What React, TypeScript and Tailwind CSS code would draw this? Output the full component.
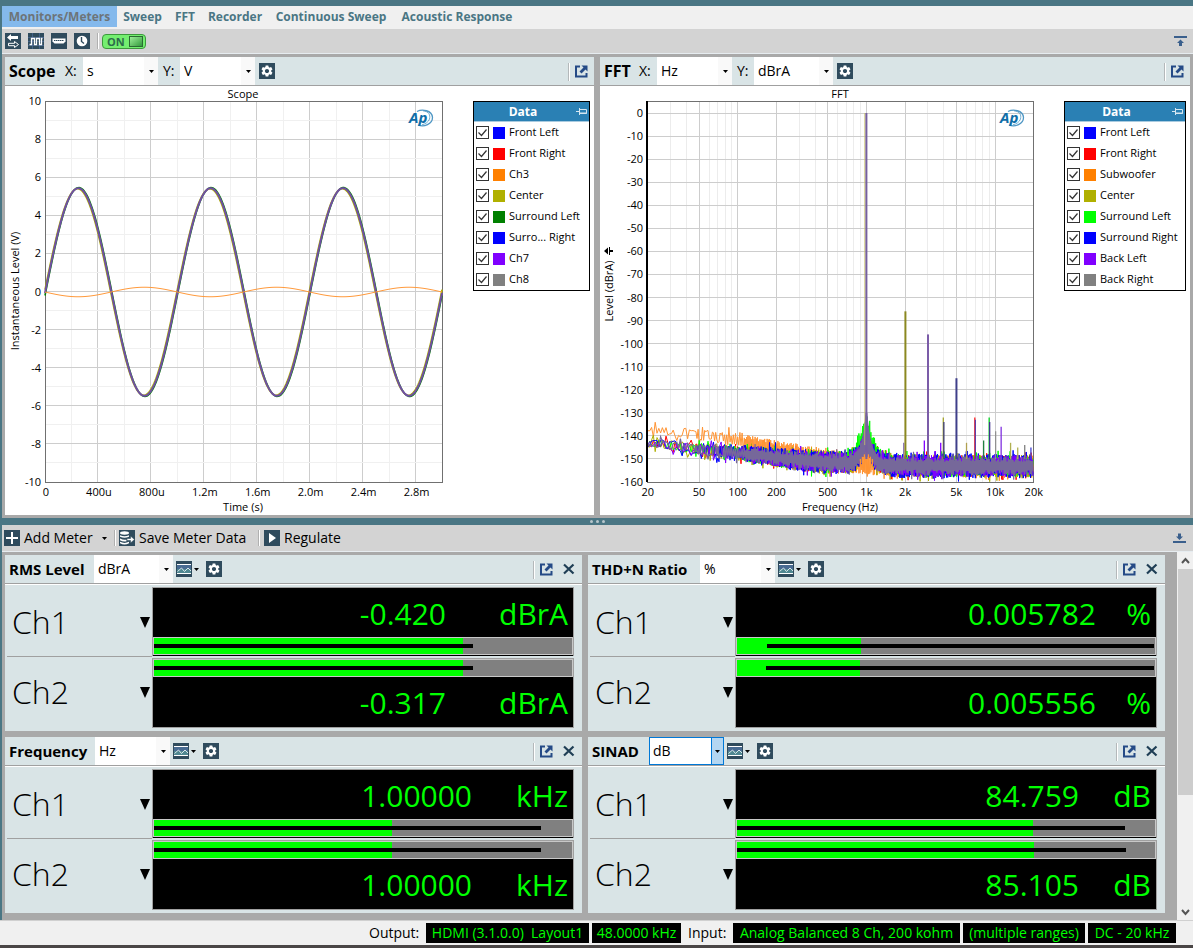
import { useState } from "react";
import type { ReactNode } from "react";
import { MdSettings } from "react-icons/md";

type Channel = { name: string; color: string };

const tabs = [
  { label: "Monitors/Meters", width: "w-[115px]" },
  { label: "Sweep", width: "w-[51px]" },
  { label: "FFT", width: "w-[34px]" },
  { label: "Recorder", width: "w-[66px]" },
  { label: "Continuous Sweep", width: "w-[126px]" },
  { label: "Acoustic Response", width: "w-[126px]" },
];

const scopeChannels: Channel[] = [
  { name: "Front Left", color: "#0000ff" },
  { name: "Front Right", color: "#ff0000" },
  { name: "Ch3", color: "#ff8000" },
  { name: "Center", color: "#b0b000" },
  { name: "Surround Left", color: "#008000" },
  { name: "Surro... Right", color: "#0000ff" },
  { name: "Ch7", color: "#8000ff" },
  { name: "Ch8", color: "#808080" },
];

const fftChannels: Channel[] = [
  { name: "Front Left", color: "#0000ff" },
  { name: "Front Right", color: "#ff0000" },
  { name: "Subwoofer", color: "#ff8000" },
  { name: "Center", color: "#b0b000" },
  { name: "Surround Left", color: "#00ff00" },
  { name: "Surround Right", color: "#0000ff" },
  { name: "Back Left", color: "#8000ff" },
  { name: "Back Right", color: "#808080" },
];

type Reading = { value: string; fill: number; from: number; to: number };

type MeterData = {
  title: string;
  titleWidth: string;
  selectWidth: string;
  unit: string;
  unitWidth: string;
  focused?: boolean;
  readings: [Reading, Reading];
};

// fill / from / to are percentages of the bar length
const meters: MeterData[] = [
  {
    title: "RMS Level",
    titleWidth: "w-[89px]",
    selectWidth: "w-[79px]",
    unit: "dBrA",
    unitWidth: "w-[122px]",
    readings: [
      { value: "-0.420", fill: 74, from: 0, to: 76.3 },
      { value: "-0.317", fill: 74, from: 0, to: 76.3 },
    ],
  },
  {
    title: "THD+N Ratio",
    titleWidth: "w-[112px]",
    selectWidth: "w-[75px]",
    unit: "%",
    unitWidth: "w-[55px]",
    readings: [
      { value: "0.005782", fill: 29.7, from: 7.2, to: 99.7 },
      { value: "0.005556", fill: 29.4, from: 7, to: 99.7 },
    ],
  },
  {
    title: "Frequency",
    titleWidth: "w-[90px]",
    selectWidth: "w-[75px]",
    unit: "Hz",
    unitWidth: "w-[96px]",
    readings: [
      { value: "1.00000", fill: 56.9, from: 0, to: 92.6 },
      { value: "1.00000", fill: 56.9, from: 0, to: 92.6 },
    ],
  },
  {
    title: "SINAD",
    titleWidth: "w-[61px]",
    selectWidth: "w-[75px]",
    unit: "dB",
    unitWidth: "w-[72px]",
    focused: true,
    readings: [
      { value: "84.759", fill: 70.8, from: 0, to: 92.8 },
      { value: "85.105", fill: 71, from: 0, to: 93 },
    ],
  },
];

/* ---------- icons ---------- */

function Tile({ children }: { children: ReactNode }) {
  return (
    <svg viewBox="0 0 16 16" className="size-4 shrink-0" aria-hidden="true">
      <rect width="16" height="16" fill="#2f4b5d" />
      {children}
    </svg>
  );
}

const SwapIcon = () => (
  <Tile>
    <path d="M6 1v2h7v3H6v2L2 4.500z" fill="#fff" />
    <path d="M9.500 8.500v1.800h-6v2.400h6v1.800l4-3z" fill="none" stroke="#fff" />
  </Tile>
);

const WaveIcon = () => (
  <Tile>
    <path d="M0 4.500h16M0 8.500h16M0 12.500h16M4.500 0v16M11.500 0v16" stroke="#4c6a9a" strokeWidth="0.700" />
    <path d="M1.500 11.500h2v-6h3v6h2v-6h3v6h2v-6h1" fill="none" stroke="#fff" strokeWidth="1.300" />
  </Tile>
);

const PortIcon = () => (
  <Tile>
    <path d="M1.500 5.500h13v3l-2 2h-9l-2-2z" fill="#fff" />
    <path d="M3 7.500h10" stroke="#2f4b5d" strokeDasharray="1 1" />
    <path d="M3 7.500h10" stroke="#2f4b5d" strokeWidth="0.500" />
  </Tile>
);

const ClockIcon = () => (
  <Tile>
    <circle cx="8" cy="8" r="5.300" fill="#fff" />
    <path d="M7.500 4v4.500l2.500 2" fill="none" stroke="#2f4b5d" strokeWidth="1.400" />
  </Tile>
);

const PlusIcon = () => (
  <Tile>
    <path d="M8 2v12M2 8h12" stroke="#fff" strokeWidth="2" />
  </Tile>
);

const SaveDataIcon = () => (
  <Tile>
    <ellipse cx="5.500" cy="3" rx="4.500" ry="1.700" fill="#fff" />
    <path d="M1 5.200q4.500 2 9 0v1.600q-4.500 2-9 0zM1 8.400q4 2 6.500 1v1.800q-3.500.8-6.500-1zM1 11.800q4.500 2.200 9 0v1.500q-4.500 2.600-9 0z" fill="#fff" />
    <path d="M8 8.500h3.500V6L15.500 9.500l-4 3.500v-2.500H8z" fill="#fff" stroke="#2f4b5d" strokeWidth="0.600" />
  </Tile>
);

const PlayIcon = () => (
  <Tile>
    <path d="M5 3l7 5-7 5z" fill="#fff" />
  </Tile>
);

const GraphIcon = () => (
  <Tile>
    <rect x="1" y="3" width="14" height="10" fill="#fff" />
    <rect x="1" y="4" width="14" height="4" fill="#486b92" />
    <rect x="1" y="8" width="14" height="4" fill="#4f8791" />
    <path d="M1.500 10.500L5.500 7l3 3.500L12 7l3 3" fill="none" stroke="#e8f2f4" strokeWidth="0.900" />
  </Tile>
);

const GearTile = () => (
  <span className="flex size-4 items-center justify-center bg-[#2f4b5d] text-white">
    <MdSettings size={14} />
  </span>
);

const PopOutIcon = () => (
  <svg viewBox="0 0 13 13" className="size-[13px]" aria-hidden="true">
    <path d="M5 1.500H1v10h10.500V8" fill="none" stroke="#254a86" strokeWidth="2" />
    <path d="M6.500 0.500h6v6l-2-2-4 4-2-2 4-4z" fill="#254a86" />
  </svg>
);

const CloseIcon = () => (
  <svg viewBox="0 0 12 12" className="size-3" aria-hidden="true">
    <path d="M1 1.500l9.500 9M10.500 1.500l-9.500 9" stroke="#1f3e55" strokeWidth="2.200" />
  </svg>
);

const SmallArrow = () => (
  <svg viewBox="0 0 5 3" className="h-[3px] w-[5px] shrink-0" aria-hidden="true">
    <path d="M0 0h5L2.500 3z" fill="#000" />
  </svg>
);

const PinIcon = () => (
  <svg viewBox="0 0 11 8" className="h-2 w-[11px]" aria-hidden="true">
    <path d="M0 3.500h3.500M3.500 0v7M3.500 1.500h7v4h-7" fill="none" stroke="#d5e6f1" />
    <path d="M4 5h7" stroke="#d5e6f1" />
  </svg>
);

function CollapseIcon({ up }: { up?: boolean }) {
  return (
    <svg viewBox="0 0 13 11" className="h-[11px] w-[13px]" aria-hidden="true">
      {up ? (
        <path d="M0 0h13v2H0zM6.500 3.500L10 7H8v3H5V7H3z" fill="#3a5f8c" />
      ) : (
        <path d="M0 8h13v2H0zM6.500 7L10 3.500H8v-3H5v3H3z" fill="#3a5f8c" />
      )}
    </svg>
  );
}

/* ---------- shared controls ---------- */

function UnitSelect({
  label,
  value,
  width,
  focused,
}: {
  label: string;
  value: string;
  width: string;
  focused?: boolean;
}) {
  return (
    <span className={"relative flex h-7 shrink-0 bg-white " + width}>
      <select
        aria-label={label}
        defaultValue={value}
        className={
          "h-full w-full appearance-none bg-transparent text-sm text-black outline-none " +
          (focused ? "border border-[#0078d7] pl-[3px]" : "pl-1")
        }
      >
        <option>{value}</option>
      </select>
      <span
        className={
          "pointer-events-none absolute inset-y-0 right-0 flex items-center justify-center " +
          (focused ? "w-[13px] border border-[#0078d7] bg-[#b3d6f2]" : "w-3.5 bg-[#f9f9f9]")
        }
      >
        <SmallArrow />
      </span>
    </span>
  );
}

function HeaderTools({ name, closable }: { name: string; closable?: boolean }) {
  return (
    <div className={"ml-auto flex h-full items-center gap-[5px] " + (closable ? "pr-[7px]" : "pr-1.5")}>
      <span className="mt-px h-[18px] w-0.5 border-l border-[#b4b8ba] bg-white" />
      <button aria-label={"Undock " + name}>
        <PopOutIcon />
      </button>
      {closable && (
        <button aria-label={"Close " + name} className="ml-[5px]">
          <CloseIcon />
        </button>
      )}
    </div>
  );
}

function Legend({ channels, width }: { channels: Channel[]; width: string }) {
  return (
    <div className={"mt-[15px] mr-1 shrink-0 self-start border border-black bg-white " + width}>
      <div className="flex h-5 items-center border-b border-[#a9cbe0] bg-[#2a80b4] text-xs font-bold text-white">
        <span className="flex-1 pr-1 text-center">Data</span>
        <button aria-label="Pin legend" className="pr-0.5">
          <PinIcon />
        </button>
      </div>
      {channels.map((c) => (
        <label key={c.name} className="flex h-[21px] items-center pl-0.5 text-[11px] whitespace-nowrap">
          <span className="relative mr-[4px] size-[13px]">
            <input
              type="checkbox"
              defaultChecked
              className="peer block size-[13px] appearance-none border border-[#333] bg-white"
            />
            <svg
              viewBox="0 0 13 13"
              className="pointer-events-none absolute inset-0 hidden size-[13px] peer-checked:block"
              aria-hidden="true"
            >
              <path d="M2.500 6.500l3 3 5-6" fill="none" stroke="#333" strokeWidth="1.200" />
            </svg>
          </span>
          <span className="mr-1 size-3" style={{ backgroundColor: c.color }} />
          {c.name}
        </label>
      ))}
    </div>
  );
}

function GraphPanel({
  title,
  titleWidth,
  x,
  y,
  yWidth,
  children,
}: {
  title: string;
  titleWidth: string;
  x: string;
  y: string;
  yWidth: string;
  children: ReactNode;
}) {
  return (
    <section className="flex min-w-0 flex-col bg-white">
      <header className="flex h-[29px] items-center border-b border-[#a0a0a0] bg-[#d9e4e6] pl-1 text-sm">
        <h2 className={"shrink-0 text-base font-bold " + titleWidth}>{title}</h2>
        <span className="w-[18px]">X:</span>
        <UnitSelect label={title + " X unit"} value={x} width="w-[75px]" />
        <span className="w-[22px] pl-[5px]">Y:</span>
        <UnitSelect label={title + " Y unit"} value={y} width={yWidth} />
        <button aria-label={title + " settings"} className="ml-1">
          <GearTile />
        </button>
        <HeaderTools name={title} />
      </header>
      <div className="flex">{children}</div>
    </section>
  );
}

/* ---------- graphs ---------- */

function ApLogo({ x, y }: { x: number; y: number }) {
  return (
    <g transform={`translate(${x} ${y})`}>
      <path d="M8 1.500C13 -1 23 0 23.500 7.500C23.500 14 15 17.500 9 15" fill="none" stroke="#4f97c4" strokeWidth="1.300" />
      <path d="M14 .8C20 1.500 21.500 5 20.500 9C19.500 12 16.500 14 13 14.800" fill="none" stroke="#4f97c4" strokeWidth="0.800" />
      <text x="0" y="12.500" fontSize="15" fontWeight="700" fontStyle="italic" fill="#0f6ea8">
        Ap
      </text>
    </g>
  );
}

// plot area of the scope, in viewBox units
const SC = { left: 40, right: 437, top: 15, bottom: 396 };

function sinePath(amplitude: number, shift: number) {
  const mid = (SC.top + SC.bottom) / 2 + 0.5;
  const perUnit = (SC.bottom - SC.top) / 20;
  const period = (SC.right - SC.left) / 3;
  let d = "";
  for (let x = SC.left; x <= SC.right; x++) {
    const t = ((x - SC.left - shift) / period) * Math.PI * 2;
    d += (d ? "L" : "M") + x + " " + (mid - amplitude * perUnit * Math.sin(t)).toFixed(2);
  }
  return d;
}

function ScopeGraph() {
  const stepX = (SC.right - SC.left) / 15;
  const stepY = (SC.bottom - SC.top) / 20;
  const xLabels = ["0", "400u", "800u", "1.2m", "1.6m", "2.0m", "2.4m", "2.8m"];
  return (
    <svg viewBox="0 0 468 429" className="block min-w-0 flex-1" fontSize="11" role="img" aria-label="Scope">
      <g shapeRendering="crispEdges">
        {Array.from({ length: 14 }, (_, i) => i + 1).map((i) => (
          <path
            key={i}
            d={`M${SC.left + i * stepX} ${SC.top}V${SC.bottom}`}
            stroke={i % 2 ? "#f0f0f0" : "#cdcdcd"}
          />
        ))}
        {Array.from({ length: 19 }, (_, i) => i + 1).map((i) => (
          <path
            key={i}
            d={`M${SC.left} ${SC.top + i * stepY}H${SC.right}`}
            stroke={i % 2 ? "#f0f0f0" : "#cdcdcd"}
          />
        ))}
        <rect
          x={SC.left + 0.5}
          y={SC.top + 0.5}
          width={SC.right - SC.left}
          height={SC.bottom - SC.top}
          fill="none"
          stroke="#707070"
        />
      </g>
      <path d={sinePath(5.48, 0.7)} fill="none" stroke="#008000" strokeWidth="1.600" />
      <path d={sinePath(5.42, -0.5)} fill="none" stroke="#b0b000" strokeWidth="1.600" />
      <path d={sinePath(5.45, 0.2)} fill="none" stroke="#6f4fa3" strokeWidth="2" />
      <path d={sinePath(-0.25, 0)} fill="none" stroke="#ff9a3c" />
      <text x="238" y="12" textAnchor="middle">
        Scope
      </text>
      {Array.from({ length: 11 }, (_, i) => 10 - i * 2).map((v, i) => (
        <text key={v} x="36" y={SC.top + i * 2 * stepY + 4} textAnchor="end">
          {v}
        </text>
      ))}
      {xLabels.map((v, i) => (
        <text key={v} x={SC.left + 1 + i * 2 * stepX} y="410" textAnchor="middle">
          {v}
        </text>
      ))}
      <text x="238" y="425" textAnchor="middle">
        Time (s)
      </text>
      <text transform="translate(14 205) rotate(-90)" textAnchor="middle">
        Instantaneous Level (V)
      </text>
      <ApLogo x={404} y={24} />
    </svg>
  );
}

// plot area of the FFT, in viewBox units
const FF = { left: 47, right: 433, top: 15, bottom: 396, zero: 27 };
const freqX = (f: number) => FF.left + 0.8 + (Math.log10(f / 20) / 3) * (FF.right - FF.left);
const levelY = (db: number) => FF.zero - (db / 160) * (FF.bottom - FF.zero);

function random(seed: number) {
  let s = seed;
  return () => {
    s = (s * 16807) % 2147483647;
    return s / 2147483647;
  };
}

type NoiseOptions = { lift?: number; skirt?: number; skirtWidth?: number; spread?: number };

function noisePath(seed: number, options: NoiseOptions = {}) {
  const { lift = 0, skirt = 0, skirtWidth = 6, spread = 1 } = options;
  const rnd = random(seed);
  const center = freqX(1000);
  let d = "";
  let x = FF.left + 1;
  let up = false;
  while (x < FF.right) {
    const p = (x - FF.left) / (FF.right - FF.left);
    let base = -143 - 8 * Math.min(1, p / 0.42) - 2 * Math.max(0, Math.min(1, (p - 0.42) / 0.25));
    // the lifted trace stays high up to 100 Hz and then falls back to the others
    base += lift * Math.max(0, Math.min(1, 1 - (p - 0.2) / 0.35));
    if (skirt) base += skirt * Math.exp(-Math.abs(x - center) / skirtWidth);
    const half = (1.5 + 3.2 * Math.min(1, p / 0.45)) * spread;
    const spike = rnd() > 0.93 ? 2 : 0;
    const v = base + (up ? 1 : -1) * (half * (0.4 + 0.6 * rnd()) + spike);
    d += (d ? "L" : "M") + x.toFixed(2) + " " + Math.min(FF.bottom, levelY(v)).toFixed(2);
    up = p < 0.2 ? rnd() > 0.5 : !up;
    x += p < 0.12 ? 1.8 : p < 0.25 ? 1.1 : 0.6;
  }
  return d;
}

const traces = [
  { color: "#ff0000", d: noisePath(101, { skirt: 12 }) },
  { color: "#ff9433", d: noisePath(77, { lift: 6 }) },
  { color: "#b0b000", d: noisePath(4242, { skirt: 12, spread: 1.1 }) },
  { color: "#00ff00", d: noisePath(909, { skirt: 19, skirtWidth: 8 }) },
  { color: "#0000ff", d: noisePath(5511, { skirt: 12, spread: 1.15 }) },
  { color: "#8000ff", d: noisePath(321, { skirt: 13 }) },
];

const harmonics = [
  { f: 1950, db: -143, color: "#8a70b0" },
  { f: 2010, db: -86, color: "#8b8820" },
  { f: 2820, db: -142, color: "#8000ff" },
  { f: 3010, db: -96, color: "#7b5ca8" },
  { f: 3780, db: -143, color: "#8000ff" },
  { f: 3960, db: -132, color: "#a3a32a" },
  { f: 4000, db: -134, color: "#3b3b7a" },
  { f: 5010, db: -115, color: "#3f3f8a" },
  { f: 6000, db: -143, color: "#b0a050" },
  { f: 6960, db: -132, color: "#ff2020" },
  { f: 7030, db: -133, color: "#5c40a8" },
  { f: 8150, db: -142, color: "#208040" },
  { f: 9000, db: -132, color: "#00d020" },
  { f: 9080, db: -134, color: "#403090" },
  { f: 10100, db: -138, color: "#909090" },
  { f: 11150, db: -136, color: "#8030e0" },
  { f: 13200, db: -143, color: "#b0b050" },
  { f: 15000, db: -145, color: "#b0b050" },
  { f: 17000, db: -144, color: "#808080" },
  { f: 19000, db: -145, color: "#4040d0" },
];

const gridFrequencies = [30, 40, 60, 70, 80, 90, 300, 400, 600, 700, 800, 900, 3000, 4000, 6000, 7000, 8000, 9000];
const majorFrequencies = [50, 100, 200, 500, 1000, 2000, 5000, 10000];
const fftLabels = [
  ["20", 20],
  ["50", 50],
  ["100", 100],
  ["200", 200],
  ["500", 500],
  ["1k", 1000],
  ["2k", 2000],
  ["5k", 5000],
  ["10k", 10000],
  ["20k", 20000],
] as const;

function FftGraph() {
  const center = freqX(1000);
  return (
    <svg viewBox="0 0 464 429" className="block min-w-0 flex-1" fontSize="11" role="img" aria-label="FFT">
      <g shapeRendering="crispEdges">
        {gridFrequencies.map((f) => (
          <path key={f} d={`M${freqX(f)} ${FF.top}V${FF.bottom}`} stroke="#ececec" />
        ))}
        {majorFrequencies.map((f) => (
          <path key={f} d={`M${freqX(f)} ${FF.top}V${FF.bottom}`} stroke="#cdcdcd" />
        ))}
        {Array.from({ length: 16 }, (_, i) => -i * 10).map((v) => (
          <path key={v} d={`M${FF.left} ${levelY(v)}H${FF.right}`} stroke="#cdcdcd" />
        ))}
        <rect
          x={FF.left + 0.5}
          y={FF.top + 0.5}
          width={FF.right - FF.left}
          height={FF.bottom - FF.top}
          fill="none"
          stroke="#707070"
        />
      </g>

      <g fill="none">
        {traces.map((t) => (
          <path key={t.color} d={t.d} stroke={t.color} />
        ))}
        <path
          d={`M${center - 11} ${levelY(-149)}Q${center - 3} ${levelY(-144)} ${center - 1} ${levelY(-130)}H${center + 1}Q${center + 3} ${levelY(-144)} ${center + 11} ${levelY(-149)}z`}
          fill="#7a62a0"
        />
        <path d={noisePath(64, { skirt: 12, skirtWidth: 5, spread: 0.9 })} stroke="#76689a" strokeWidth="1.200" />
        {[-6, -4, -2, 0, 2, 4, 6].map((dx) => (
          <path
            key={dx}
            d={`M${center + dx} ${levelY(-156 + Math.abs(dx) / 2)}V${levelY(-147 - Math.abs(dx) / 2)}`}
            stroke="#ff9433"
            strokeWidth="1.300"
          />
        ))}
        {harmonics.map((h) => (
          <path
            key={h.f}
            d={`M${freqX(h.f)} ${levelY(-150)}V${levelY(h.db)}`}
            stroke={h.color}
            strokeWidth={h.db > -120 ? 2 : 1.3}
          />
        ))}
        <path d={`M${center - 1.5} ${levelY(-144)}V${levelY(0)}`} stroke="#c9c46a" />
        <path d={`M${center} ${levelY(-150)}V${levelY(0)}`} stroke="#7560a0" strokeWidth="2" />
      </g>
      <path d="M47 15V396" stroke="#000" strokeWidth="2" />

      <text x="240" y="12" textAnchor="middle">
        FFT
      </text>
      {Array.from({ length: 17 }, (_, i) => -i * 10).map((v) => (
        <text key={v} x="43" y={levelY(v) + 4} textAnchor="end">
          {v}
        </text>
      ))}
      {fftLabels.map(([label, f]) => (
        <text key={label} x={freqX(f)} y="410" textAnchor="middle">
          {label}
        </text>
      ))}
      <text x="240" y="425" textAnchor="middle">
        Frequency (Hz)
      </text>
      <text transform="translate(13 205) rotate(-90)" textAnchor="middle">
        Level (dBrA)
      </text>
      <path d="M4 165l4-3.500v7zM9 161h1v8H9zM10 164h3v2h-3z" fill="#000" />
      <ApLogo x={400} y={24} />
    </svg>
  );
}

/* ---------- meters ---------- */

function LevelBar({ reading }: { reading: Reading }) {
  return (
    <div className="relative h-[18px] border border-[#c8c8c8] bg-[#808080]">
      <div className="h-full bg-[#00ff00]" style={{ width: reading.fill + "%" }} />
      <div
        className="absolute top-1.5 h-1 bg-black"
        style={{ left: reading.from + "%", width: reading.to - reading.from + "%" }}
      />
    </div>
  );
}

function ReadoutText({ value, unit, unitWidth }: { value: string; unit: string; unitWidth: string }) {
  return (
    <div className="flex h-[49px] items-center justify-end pt-0.5 pr-[5px] text-[30px] leading-none text-[#00ff00]">
      <span>{value}</span>
      <span className={"text-right " + unitWidth}>{unit}</span>
    </div>
  );
}

function ChannelCell({ name }: { name: string }) {
  return (
    <div className="flex h-[71px] items-center justify-between pr-0.5 pl-[5px]">
      <span className="pb-0.5 text-[32px] leading-none font-light">{name}</span>
      <button aria-label={name + " options"}>
        <svg viewBox="0 0 10 11" className="h-[11px] w-2.5" aria-hidden="true">
          <path d="M0 0h10L5 11z" fill="#000" />
        </svg>
      </button>
    </div>
  );
}

function Meter({ meter }: { meter: MeterData }) {
  const [first, second] = meter.readings;
  const unit = meter.unit === "Hz" ? "kHz" : meter.unit;
  return (
    <section className="min-w-0 bg-[#d9e4e6]">
      <header className="flex h-[29px] items-center border-b border-[#a0a0a0] pl-1">
        <h2 className={"-mr-1 shrink-0 text-[15px] font-bold whitespace-nowrap " + meter.titleWidth}>{meter.title}</h2>
        <UnitSelect
          label={meter.title + " unit"}
          value={meter.unit}
          width={meter.selectWidth}
          focused={meter.focused}
        />
        <button aria-label={meter.title + " graph"} className="ml-[3px] flex items-center gap-0.5">
          <GraphIcon />
          <SmallArrow />
        </button>
        <button aria-label={meter.title + " settings"} className="ml-[7px]">
          <GearTile />
        </button>
        <HeaderTools name={meter.title} closable />
      </header>
      <div className="flex border-t border-white pt-0.5 pr-2 pb-[3px] pl-0.5">
        <div className="w-[145px] shrink-0">
          <ChannelCell name="Ch1" />
          <div className="-mt-0.5 border-t border-[#a0a0a0]">
            <ChannelCell name="Ch2" />
          </div>
        </div>
        <div className="flex min-w-0 flex-1 flex-col gap-0.5">
          <div className="border border-b-0 border-[#a0a0a0] bg-black pb-px">
            <ReadoutText value={first.value} unit={unit} unitWidth={meter.unitWidth} />
            <LevelBar reading={first} />
          </div>
          <div className="border border-[#a0a0a0] bg-black pb-px">
            <LevelBar reading={second} />
            <ReadoutText value={second.value} unit={unit} unitWidth={meter.unitWidth} />
          </div>
        </div>
      </div>
    </section>
  );
}

function ScrollBar() {
  return (
    <div className="flex w-4 shrink-0 flex-col items-center bg-[#f0f0f0]" aria-hidden="true">
      <svg viewBox="0 0 16 17" className="h-[17px] w-4">
        <path d="M5 11l3.500-4 3.500 4" fill="none" stroke="#555" strokeWidth="2" />
      </svg>
      <div className="h-[226px] w-[15px] bg-[#cdcdcd]" />
      <svg viewBox="0 0 16 17" className="mt-auto h-[17px] w-4">
        <path d="M5 7l3.500 4L12 7" fill="none" stroke="#555" strokeWidth="2" />
      </svg>
    </div>
  );
}

function StatusValue({ width, children }: { width: string; children: ReactNode }) {
  return (
    <span className={"flex h-5 items-center justify-center bg-black whitespace-pre text-[#00ff00] " + width}>
      {children}
    </span>
  );
}

export default function App() {
  const [active, setActive] = useState(0);
  const [outputOn, setOutputOn] = useState(true);

  return (
    <div className="flex min-h-screen flex-col bg-[#4a7684] font-['Open_Sans','Noto_Sans',sans-serif] text-black">
      <div className="flex flex-1 flex-col pt-1.5 pl-0.5">
        <nav className="flex h-[23px] bg-[#f0f0f0] text-xs font-bold">
          {tabs.map((t, i) => (
            <button
              key={t.label}
              onClick={() => setActive(i)}
              className={
                "h-[21px] whitespace-nowrap " +
                t.width +
                (i === active ? " bg-[#84b9ec] text-[#6d7478]" : " text-[#4a7684]")
              }
            >
              {t.label}
            </button>
          ))}
        </nav>

        <div className="flex h-[25px] items-center gap-[7px] border-b border-[#e6ecf0] bg-[#d3d3d3] pr-[6px] pl-[3px]">
          <button aria-label="Signal path">
            <SwapIcon />
          </button>
          <button aria-label="Generator">
            <WaveIcon />
          </button>
          <button aria-label="Connector">
            <PortIcon />
          </button>
          <button aria-label="Clock">
            <ClockIcon />
          </button>
          <span className="h-4 w-0.5 border-l border-[#b0b0b0] bg-white" />
          <button
            aria-pressed={outputOn}
            onClick={() => setOutputOn(!outputOn)}
            className="-ml-1 flex h-[15px] w-11 items-center justify-between rounded-sm border border-[#3c9a3c] bg-[#74ee70] pr-0.5 pl-1 text-[11px] leading-none font-bold text-[#2d6b4b]"
          >
            ON
            <span className="h-[11px] w-3.5 border border-[#2c6a34] bg-linear-to-br from-[#9df09a] to-[#2f9a3c]" />
          </button>
          <button aria-label="Collapse graphs" className="ml-auto">
            <CollapseIcon up />
          </button>
        </div>

        <main className="grid grid-cols-[589fr_590fr] gap-1.5 bg-[#a9a9a9] p-[3px]">
          <GraphPanel title="Scope" titleWidth="w-14" x="s" y="V" yWidth="w-[75px]">
            <ScopeGraph />
            <Legend channels={scopeChannels} width="w-[117px]" />
          </GraphPanel>
          <GraphPanel title="FFT" titleWidth="w-[35px]" x="Hz" y="dBrA" yWidth="w-[79px]">
            <FftGraph />
            <Legend channels={fftChannels} width="w-[122px]" />
          </GraphPanel>
        </main>

        <div className="flex h-[7px] items-center justify-center gap-[3px]">
          <span className="size-[3px] rounded-full bg-[#b8c6cc]" />
          <span className="size-[3px] rounded-full bg-[#b8c6cc]" />
          <span className="size-[3px] rounded-full bg-[#b8c6cc]" />
        </div>

        <div className="flex h-[27px] items-center border-b border-[#e6ecf0] bg-[#d3d3d3] pr-[7px] pl-0.5 text-sm whitespace-nowrap">
          <button className="flex w-[110px] items-center gap-1">
            <PlusIcon />
            <span className="w-[74px] text-left">Add Meter</span>
            <SmallArrow />
          </button>
          <span className="h-4 w-0.5 border-l border-[#b0b0b0] bg-white" />
          <button className="ml-[3px] flex w-[139px] items-center gap-1">
            <SaveDataIcon />
            Save Meter Data
          </button>
          <span className="h-4 w-0.5 border-l border-[#b0b0b0] bg-white" />
          <button className="ml-1 flex items-center gap-1">
            <PlayIcon />
            Regulate
          </button>
          <button aria-label="Collapse meters" className="ml-auto">
            <CollapseIcon />
          </button>
        </div>

        <div className="flex bg-[#a9a9a9]">
          <div className="grid min-w-0 flex-1 grid-cols-2 gap-1.5 pt-[3px] pr-3 pb-[7px] pl-[3px]">
            {meters.map((m) => (
              <Meter key={m.title} meter={m} />
            ))}
          </div>
          <ScrollBar />
        </div>
      </div>

      <footer className="flex h-[25px] items-center justify-end gap-[3px] border-t border-[#d0d0d0] bg-[#f0f0f0] pr-[17px] text-sm whitespace-nowrap">
        <span className="w-[54px]">Output:</span>
        <StatusValue width="w-[163px]">{"HDMI (3.1.0.0)  Layout1"}</StatusValue>
        <StatusValue width="w-[89px]">48.0000 kHz</StatusValue>
        <span className="w-[46px] pl-1">Input:</span>
        <StatusValue width="w-[227px]">Analog Balanced 8 Ch, 200 kohm</StatusValue>
        <StatusValue width="w-[122px]">(multiple ranges)</StatusValue>
        <StatusValue width="w-[88px]">DC - 20 kHz</StatusValue>
      </footer>
      <div className="h-[3px] bg-[#4a4646]" />
    </div>
  );
}
